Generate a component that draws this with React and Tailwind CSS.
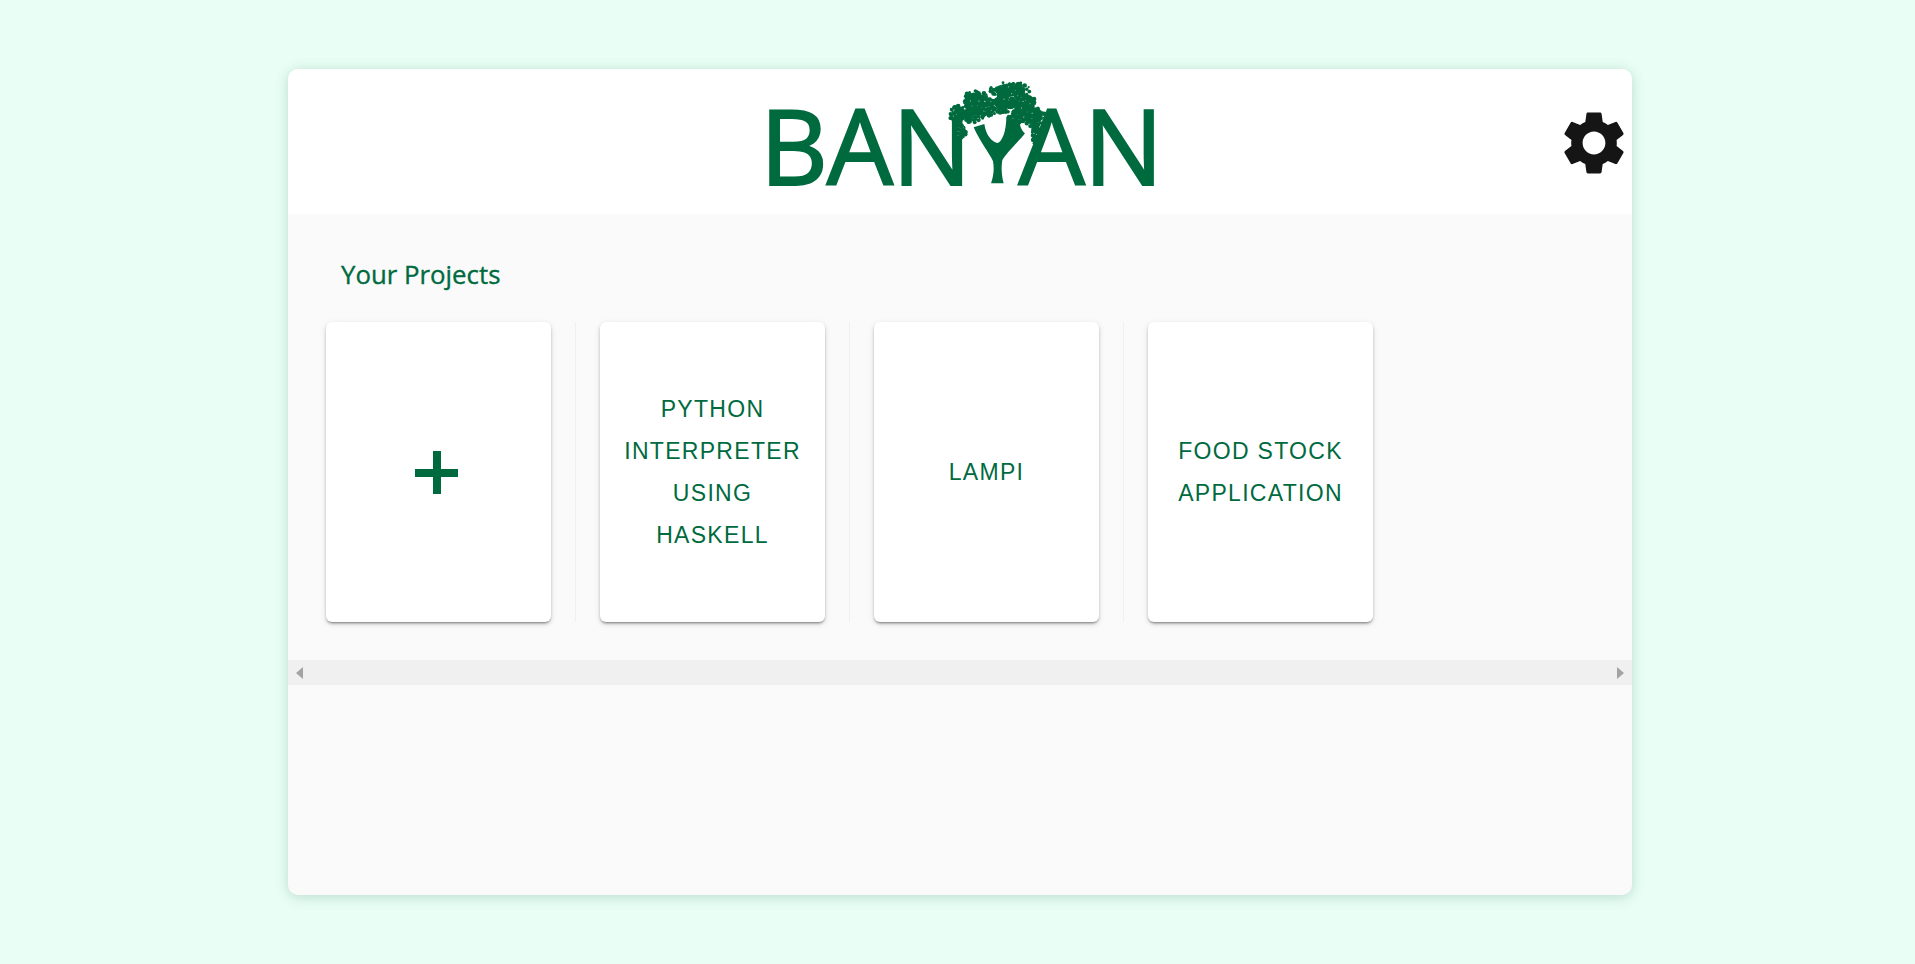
import { MdSettings } from 'react-icons/md';

const GREEN = '#006a3f';

const PROJECTS = [
  ['PYTHON', 'INTERPRETER', 'USING', 'HASKELL'],
  ['LAMPI'],
  ['FOOD STOCK', 'APPLICATION'],
];

// foliage lobes of the tree: cx, cy, rx, ry
const LOBES = [
  [42, 122, 30, 26], [46, 172, 17, 20], [92, 78, 38, 26], [84, 118, 34, 28], [132, 100, 24, 26],
  [195, 48, 58, 24], [172, 88, 38, 28], [238, 88, 38, 24], [264, 128, 36, 28], [272, 180, 11, 30], [222, 128, 30, 20],
];

// small seeded random so the leaves stay the same on every render
function seeded(seed) {
  let s = seed;
  return () => {
    s = (s * 16807) % 2147483647;
    return (s - 1) / 2147483646;
  };
}

function buildLeaves() {
  const rnd = seeded(4711);
  const leaves = [];
  const gaps = [];
  LOBES.forEach(([cx, cy, rx, ry]) => {
    for (let i = 0; i < 60; i++) {
      const a = rnd() * Math.PI * 2;
      const d = 0.5 + rnd() * 0.55;
      leaves.push([cx + Math.cos(a) * rx * d, cy + Math.sin(a) * ry * d, 3 + rnd() * 4]);
    }
    for (let i = 0; i < 6; i++) {
      const a = rnd() * Math.PI * 2;
      const d = Math.sqrt(rnd()) * 0.8;
      gaps.push([cx + Math.cos(a) * rx * d, cy + Math.sin(a) * ry * d, 0.8 + rnd() * 1.2]);
    }
  });
  return { leaves, gaps };
}

const { leaves, gaps } = buildLeaves();

function TreeMark() {
  return (
    <svg viewBox="0 0 345 345" className="absolute left-[178px] top-[-33px] w-[115px] h-[115px]" fill={GREEN}>
      <path d="M138 328 C146 305 148 282 144 262 C134 238 106 205 86 160 L118 150 C122 182 140 204 157 207 C172 203 184 170 184 128 L222 140 C226 160 232 172 240 178 C222 202 186 234 172 258 C168 282 170 305 176 328 Z" />
      {LOBES.map(([cx, cy, rx, ry], i) => (
        <ellipse key={i} cx={cx} cy={cy} rx={rx * 0.8} ry={ry * 0.8} />
      ))}
      {leaves.map(([cx, cy, r], i) => (
        <circle key={i} cx={cx} cy={cy} r={r} />
      ))}
      {gaps.map(([cx, cy, r], i) => (
        <circle key={i} cx={cx} cy={cy} r={r} fill="#ffffff" opacity="0.6" />
      ))}
    </svg>
  );
}

function Logo() {
  return (
    <div className="relative w-[386px] h-[76px] text-[#006a3f] font-['Open_Sans',sans-serif] text-[105px] leading-[76px] tracking-[-1px] [-webkit-text-stroke:2px_#006a3f]">
      <span className="absolute left-[-7px] top-0">BAN</span>
      <TreeMark />
      <span className="absolute right-[-9px] top-0">AN</span>
    </div>
  );
}

function Card({ children }) {
  return (
    <div className="w-[225px] h-[300px] shrink-0 bg-white rounded-[6px] shadow-[0_2px_3px_-1px_rgba(0,0,0,0.5),0_2px_6px_rgba(0,0,0,0.12)] flex flex-col items-center justify-center text-[#006a3f]">
      {children}
    </div>
  );
}

export default function App() {
  return (
    <div className="min-h-[964px] bg-[#e9fff6] pt-[69px] pl-[288px]">
      <div className="w-[1344px] h-[826px] rounded-[10px] bg-[#fafafa] shadow-[0_2px_14px_rgba(0,70,40,0.2)] overflow-hidden flex flex-col">
        <header className="h-[145px] bg-white flex items-center justify-center relative pt-[6px]">
          <Logo />
          <MdSettings className="absolute right-0 top-[36px] text-[#151515]" size={76} />
        </header>

        <h2 className="mt-[44px] ml-[53px] text-[25.8px] leading-[32px] font-normal text-[#006a3f] font-['Open_Sans',sans-serif] [-webkit-text-stroke:0.35px_#006a3f]">
          Your Projects
        </h2>

        <div className="mt-[32px] pl-[38px] flex">
          <Card>
            <svg width="43" height="43" viewBox="0 0 43 43" fill={GREEN} className="mr-[4px]">
              <path d="M18 0h8v18h17v8H26v17h-8V26H0v-8h18z" />
            </svg>
          </Card>
          {PROJECTS.map((lines, i) => (
            <div key={i} className="flex">
              <div className="mx-[24px] w-px h-[300px] bg-[#f0f0f0]" />
              <Card>
                {lines.map(line => (
                  <div key={line} className="text-[23px] leading-[42px] tracking-[1.3px] font-['Liberation_Sans',sans-serif]">
                    {line}
                  </div>
                ))}
              </Card>
            </div>
          ))}
        </div>

        <div className="mt-[38px] h-[25px] bg-[#f0f0f0] flex items-center justify-between px-[8px]">
          <svg width="7" height="12" viewBox="0 0 7 12" fill="#a3a3a3"><path d="M7 0v12L0 6z" /></svg>
          <svg width="7" height="12" viewBox="0 0 7 12" fill="#a3a3a3"><path d="M0 0v12l7-6z" /></svg>
        </div>
      </div>
    </div>
  );
}
